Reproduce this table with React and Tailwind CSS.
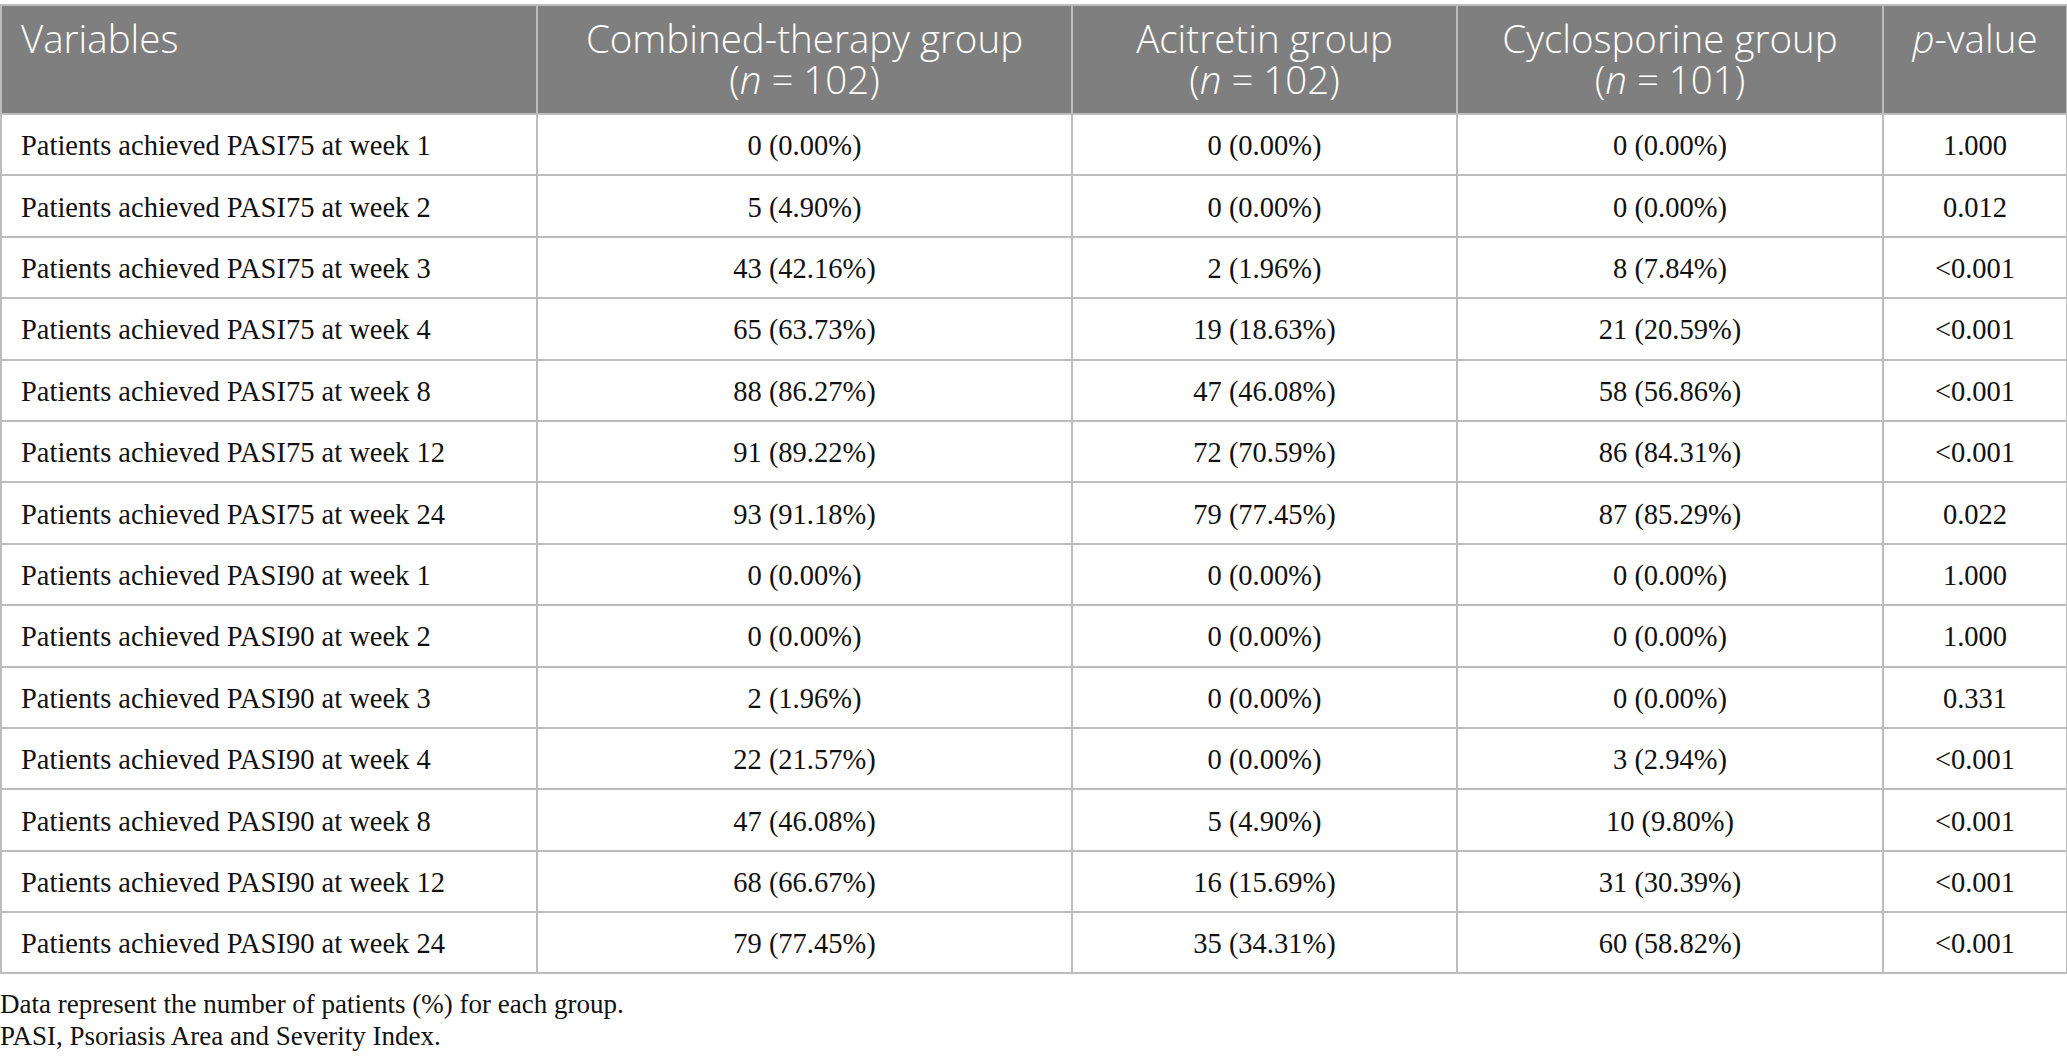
const rows = [
  ['Patients achieved PASI75 at week 1', '0 (0.00%)', '0 (0.00%)', '0 (0.00%)', '1.000'],
  ['Patients achieved PASI75 at week 2', '5 (4.90%)', '0 (0.00%)', '0 (0.00%)', '0.012'],
  ['Patients achieved PASI75 at week 3', '43 (42.16%)', '2 (1.96%)', '8 (7.84%)', '<0.001'],
  ['Patients achieved PASI75 at week 4', '65 (63.73%)', '19 (18.63%)', '21 (20.59%)', '<0.001'],
  ['Patients achieved PASI75 at week 8', '88 (86.27%)', '47 (46.08%)', '58 (56.86%)', '<0.001'],
  ['Patients achieved PASI75 at week 12', '91 (89.22%)', '72 (70.59%)', '86 (84.31%)', '<0.001'],
  ['Patients achieved PASI75 at week 24', '93 (91.18%)', '79 (77.45%)', '87 (85.29%)', '0.022'],
  ['Patients achieved PASI90 at week 1', '0 (0.00%)', '0 (0.00%)', '0 (0.00%)', '1.000'],
  ['Patients achieved PASI90 at week 2', '0 (0.00%)', '0 (0.00%)', '0 (0.00%)', '1.000'],
  ['Patients achieved PASI90 at week 3', '2 (1.96%)', '0 (0.00%)', '0 (0.00%)', '0.331'],
  ['Patients achieved PASI90 at week 4', '22 (21.57%)', '0 (0.00%)', '3 (2.94%)', '<0.001'],
  ['Patients achieved PASI90 at week 8', '47 (46.08%)', '5 (4.90%)', '10 (9.80%)', '<0.001'],
  ['Patients achieved PASI90 at week 12', '68 (66.67%)', '16 (15.69%)', '31 (30.39%)', '<0.001'],
  ['Patients achieved PASI90 at week 24', '79 (77.45%)', '35 (34.31%)', '60 (58.82%)', '<0.001'],
]

const groups = [
  { label: 'Combined-therapy group', n: '102' },
  { label: 'Acitretin group', n: '102' },
  { label: 'Cyclosporine group', n: '101' },
]

export default function App() {
  return (
    <div className="min-h-screen bg-white pt-[4px]">
      <table className="w-[2066px] table-fixed border-collapse border-2 border-[#bdbdbd]">
        <colgroup>
          <col className="w-[536px]" />
          <col className="w-[535px]" />
          <col className="w-[385px]" />
          <col className="w-[426px]" />
          <col className="w-[184px]" />
        </colgroup>
        <thead>
          <tr className="h-[109px] bg-[#7f7f7f] text-white font-['Open_Sans',sans-serif] font-light text-[38.5px] leading-[41px]">
            <th className="border-2 border-[#bdbdbd] px-[19px] pt-[12px] align-top text-left font-light">Variables</th>
            {groups.map((g) => (
              <th key={g.label} className="border-2 border-[#bdbdbd] px-2 pt-[12px] align-top text-center font-light">
                <div>{g.label}</div>
                <div>(<i>n</i> = {g.n})</div>
              </th>
            ))}
            <th className="border-2 border-[#bdbdbd] px-2 pt-[12px] align-top text-center font-light">
              <i>p</i>-value
            </th>
          </tr>
        </thead>
        <tbody className="font-['Liberation_Serif',serif] text-[28.5px] text-[#111]">
          {rows.map((r) => (
            <tr key={r[0]} className="h-[61.4px]">
              <td className="border-2 border-[#bdbdbd] px-[19px] pt-[4px] pb-0 text-left">{r[0]}</td>
              {r.slice(1).map((v, i) => (
                <td key={i} className="border-2 border-[#bdbdbd] px-2 pt-[4px] pb-0 text-center">{v}</td>
              ))}
            </tr>
          ))}
        </tbody>
      </table>
      <div className="mt-[14px] font-['Liberation_Serif',serif] text-[27px] leading-[32px] text-[#111]">
        <p>Data represent the number of patients (%) for each group.</p>
        <p>PASI, Psoriasis Area and Severity Index.</p>
      </div>
    </div>
  )
}
